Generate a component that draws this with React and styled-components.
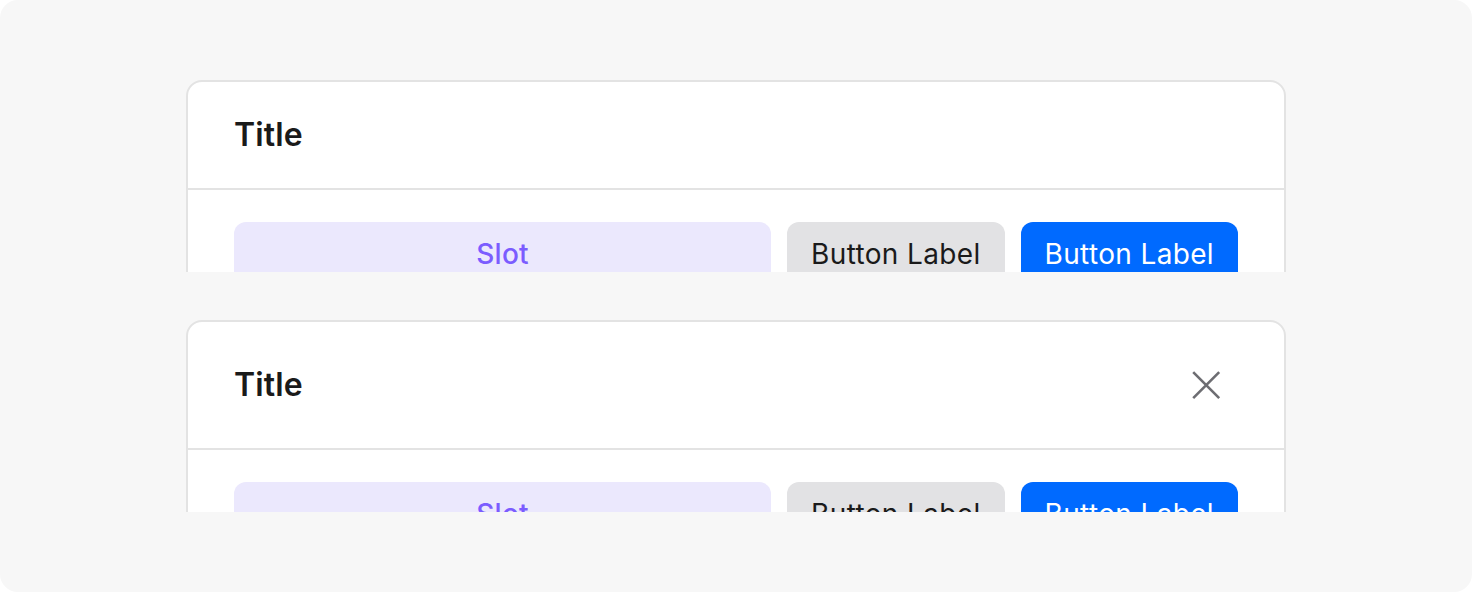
import styled, { createGlobalStyle } from 'styled-components';

const GlobalStyle = createGlobalStyle`
  html, body {
    margin: 0;
    padding: 0;
    background: #ffffff;
  }
  body {
    font-family: Inter, "Noto Sans", "Liberation Sans", sans-serif;
    -webkit-font-smoothing: antialiased;
  }
`;

const Canvas = styled.div`
  width: 1472px;
  height: 592px;
  box-sizing: border-box;
  background: #f7f7f7;
  border-radius: 18px;
  padding: 80px 186px;
  display: flex;
  flex-direction: column;
  gap: 48px;
`;

// each example only shows the top part of the dialog
const Preview = styled.div`
  height: 192px;
  overflow: hidden;
`;

const Dialog = styled.div`
  background: #ffffff;
  border: 2px solid #e3e3e3;
  border-radius: 16px;
  box-sizing: border-box;
`;

const Header = styled.div`
  padding: 31px 46px;
  display: flex;
  align-items: center;
  justify-content: space-between;
  border-bottom: 2px solid #e3e3e3;
`;

const Title = styled.h2`
  margin: 0;
  font-size: 32px;
  line-height: 44px;
  font-weight: 600;
  color: #1a1a1a;
  letter-spacing: 0.1px;
`;

const CloseButton = styled.button`
  width: 64px;
  height: 64px;
  padding: 0;
  border: none;
  background: transparent;
  color: #6d6d72;
  display: flex;
  align-items: center;
  justify-content: center;
  cursor: pointer;
`;

const Footer = styled.div`
  padding: 32px 46px;
  display: flex;
  gap: 16px;
`;

const Slot = styled.div`
  flex: 1;
  height: 64px;
  border-radius: 12px;
  background: #ebe8fd;
  color: #7b5cff;
  font-size: 28px;
  font-weight: 500;
  letter-spacing: 0.3px;
  display: flex;
  align-items: center;
  justify-content: center;
`;

const Button = styled.button`
  height: 64px;
  padding: 0 24px;
  border: none;
  border-radius: 12px;
  font-family: inherit;
  font-size: 28px;
  font-weight: 400;
  letter-spacing: 0.35px;
  background: ${(props) => (props.$primary ? '#006aff' : '#e2e2e4')};
  color: ${(props) => (props.$primary ? '#ffffff' : '#1a1a1a')};
  cursor: pointer;
`;

function CloseIcon() {
  return (
    <svg width="64" height="64" viewBox="0 0 32 32" fill="none">
      <path
        d="M9.6 9.6L22.6 22.6M22.6 9.6L9.6 22.6"
        stroke="currentColor"
        strokeWidth="1.3"
      />
    </svg>
  );
}

function ExampleDialog({ closable }) {
  return (
    <Preview>
      <Dialog>
        <Header>
          <Title>Title</Title>
          {closable && (
            <CloseButton aria-label="Close">
              <CloseIcon />
            </CloseButton>
          )}
        </Header>
        <Footer>
          <Slot>Slot</Slot>
          <Button>Button Label</Button>
          <Button $primary>Button Label</Button>
        </Footer>
      </Dialog>
    </Preview>
  );
}

export default function App() {
  return (
    <>
      <GlobalStyle />
      <Canvas>
        <ExampleDialog />
        <ExampleDialog closable />
      </Canvas>
    </>
  );
}
